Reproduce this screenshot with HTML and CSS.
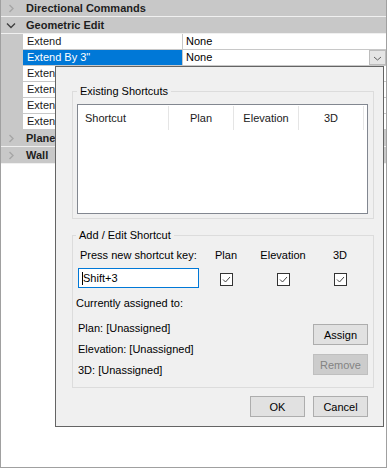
FILE: index.html
```html
<!DOCTYPE html>
<html lang="en">
<head>
  <meta charset="UTF-8" />
  <title>Shortcut Editor</title>
  <link rel="stylesheet" href="styles.css">
</head>
<body>

  <div class="grid">
    <div class="cat">
      <span class="gutter"><svg width="22" height="16"><polyline points="8.5,5 12,8.5 8.5,12" fill="none" stroke="#a6a6a6" stroke-width="1.4"/></svg></span>
      <span class="cat-name">Directional Commands</span>
    </div>
    <div class="cat">
      <span class="gutter"><svg width="22" height="16"><polyline points="6,6.5 10,10.5 14,6.5" fill="none" stroke="#404040" stroke-width="1.4"/></svg></span>
      <span class="cat-name">Geometric Edit</span>
    </div>
    <div class="row">
      <span class="gutter"></span>
      <span class="name">Extend</span>
      <span class="value">None</span>
    </div>
    <div class="row selected">
      <span class="gutter"></span>
      <span class="name">Extend By 3"</span>
      <span class="value">None
        <span class="drop"><svg width="15" height="14"><polyline points="4,6 7.5,9 11,6" fill="none" stroke="#606060" stroke-width="1"/></svg></span>
      </span>
    </div>
    <!-- these rows sit under the open editor -->
    <div class="row"><span class="gutter"></span><span class="name">Extend</span><span class="value"></span></div>
    <div class="row"><span class="gutter"></span><span class="name">Extend</span><span class="value"></span></div>
    <div class="row"><span class="gutter"></span><span class="name">Extend</span><span class="value"></span></div>
    <div class="row"><span class="gutter"></span><span class="name">Extend</span><span class="value"></span></div>
    <div class="cat">
      <span class="gutter"><svg width="22" height="16"><polyline points="8.5,5 12,8.5 8.5,12" fill="none" stroke="#a6a6a6" stroke-width="1.4"/></svg></span>
      <span class="cat-name">Plane</span>
    </div>
    <div class="cat">
      <span class="gutter"><svg width="22" height="16"><polyline points="8.5,5 12,8.5 8.5,12" fill="none" stroke="#a6a6a6" stroke-width="1.4"/></svg></span>
      <span class="cat-name">Wall</span>
    </div>

    <!-- dropdown editor opened over the grid -->
    <div class="dialog">
      <fieldset class="group first">
        <legend>Existing Shortcuts</legend>
        <div class="listview">
          <div class="lv-head">
            <span class="col col-key">Shortcut</span>
            <span class="col">Plan</span>
            <span class="col">Elevation</span>
            <span class="col">3D</span>
          </div>
        </div>
      </fieldset>

      <fieldset class="group second">
        <legend>Add / Edit Shortcut</legend>
        <div class="key-grid">
          <span class="press">Press new shortcut key:</span>
          <span class="view">Plan</span>
          <span class="view">Elevation</span>
          <span class="view">3D</span>

          <div class="textbox"><span class="caret"></span>Shift+3</div>
          <span class="check"><svg width="13" height="13"><rect x="0.5" y="0.5" width="12" height="12" fill="#fff" stroke="#333"/><polyline points="3,6.5 5.5,9 10,4" fill="none" stroke="#444" stroke-width="1"/></svg></span>
          <span class="check"><svg width="13" height="13"><rect x="0.5" y="0.5" width="12" height="12" fill="#fff" stroke="#333"/><polyline points="3,6.5 5.5,9 10,4" fill="none" stroke="#444" stroke-width="1"/></svg></span>
          <span class="check"><svg width="13" height="13"><rect x="0.5" y="0.5" width="12" height="12" fill="#fff" stroke="#333"/><polyline points="3,6.5 5.5,9 10,4" fill="none" stroke="#444" stroke-width="1"/></svg></span>
        </div>

        <div class="assigned-title">Currently assigned to:</div>

        <div class="assigned">
          <div class="assigned-list">
            <span>Plan: [Unassigned]</span>
            <span>Elevation: [Unassigned]</span>
            <span>3D: [Unassigned]</span>
          </div>
          <div class="side-buttons">
            <button class="btn">Assign</button>
            <button class="btn disabled">Remove</button>
          </div>
        </div>
      </fieldset>

      <div class="footer">
        <button class="btn">OK</button>
        <button class="btn">Cancel</button>
      </div>
    </div>
  </div>

</body>
</html>
```

FILE: styles.css
```css
html, body {
  margin: 0;
  padding: 0;
  background: #fff;
  font-family: "Liberation Sans", Arial, sans-serif;
  font-size: 11px;
  color: #000;
}

/* Property grid */
.grid {
  position: relative;
  width: 387px;
  height: 468px;
  box-sizing: border-box;
  border: 1px solid #a0a0a0;
  border-top: none;
  background: #fff;
  display: flex;
  flex-direction: column;
  overflow: hidden;
}

.cat {
  display: flex;
  align-items: center;
  height: 16px;
  background: #c8c8c8;
  border-bottom: 1px solid #f0f0f0;
}

.gutter {
  width: 22px;
  height: 16px;
  flex: none;
  background: #c8c8c8;
}

.gutter svg {
  display: block;
}

.cat-name {
  font-weight: bold;
  color: #1e1e1e;
  padding-left: 3px;
  line-height: 16px;
}

.row {
  display: flex;
  height: 15px;
  border-bottom: 1px solid #c8c8c8;
  line-height: 15px;
}

.row .gutter {
  height: 16px;
}

.row .name {
  width: 155px;
  padding-left: 4px;
  border-right: 1px solid #c8c8c8;
  color: #1a1a1a;
  flex: none;
}

.row .value {
  flex: 1;
  padding-left: 3px;
  position: relative;
}

.row.selected .name {
  background: #0078d7;
  color: #fff;
}

.drop {
  position: absolute;
  right: 0;
  top: 0;
  width: 15px;
  height: 13px;
  background: #e5e5e5;
  border: 1px solid #bcbcbc;
}

.drop svg {
  display: block;
}

/* Shortcut dialog */
.dialog {
  position: absolute;
  left: 54px;
  top: 66px;
  width: 327px;
  height: 359px;
  border: 1px solid #646464;
  background: #f0f0f0;
  display: flex;
  flex-direction: column;
}

.group {
  margin: 0 9px 0 16px;
  border: 1px solid #dcdcdc;
  min-width: 0;
}

.group legend {
  padding: 0 3px;
  line-height: 13px;
  color: #000;
}

.group.first {
  margin-top: 18px;
  padding: 6px 5px 4px 4px;
}

.group.second {
  margin-top: 10px;
  padding: 6px 5px 10px 3px;
}

.listview {
  height: 108px;
  background: #fff;
  border: 1px solid #828790;
}

.lv-head {
  display: flex;
  height: 26px;
  align-items: center;
}

.col {
  flex: none;
  width: 64px;
  height: 24px;
  line-height: 24px;
  text-align: center;
  border-right: 1px solid #e5e5e5;
  color: #1a1a1a;
}

.col-key {
  width: 83px;
  text-align: left;
  padding-left: 7px;
}

.key-grid {
  display: grid;
  grid-template-columns: 122px 56px 58px 56px;
  grid-template-rows: 14px 20px;
  row-gap: 6px;
  align-items: center;
}

.press {
  padding-left: 4px;
}

.view {
  text-align: center;
}

.textbox {
  margin-left: 2px;
  width: 116px;
  height: 18px;
  border: 1px solid #0078d7;
  background: #fff;
  line-height: 18px;
  padding-left: 3px;
  display: flex;
  align-items: center;
}

.caret {
  width: 1px;
  height: 13px;
  background: #000;
}

.check {
  justify-self: center;
  margin-top: 3px;
  height: 13px;
}

.check svg {
  display: block;
}

.assigned-title {
  margin-top: 8px;
  line-height: 14px;
}

.assigned {
  display: flex;
  justify-content: space-between;
  margin-top: 8px;
}

.assigned-list {
  display: flex;
  flex-direction: column;
  gap: 7px;
  padding-left: 2px;
  padding-top: 3px;
  line-height: 14px;
}

.side-buttons {
  display: flex;
  flex-direction: column;
  gap: 9px;
  padding-top: 6px;
}

.btn {
  width: 55px;
  height: 21px;
  padding: 0;
  font-family: inherit;
  font-size: 11px;
  color: #000;
  background: #e1e1e1;
  border: 1px solid #adadad;
  border-radius: 0;
}

.btn.disabled {
  background: #cccccc;
  border-color: #bfbfbf;
  color: #838383;
}

.footer {
  display: flex;
  justify-content: flex-end;
  gap: 8px;
  margin: 8px 15px 0 0;
}
```
